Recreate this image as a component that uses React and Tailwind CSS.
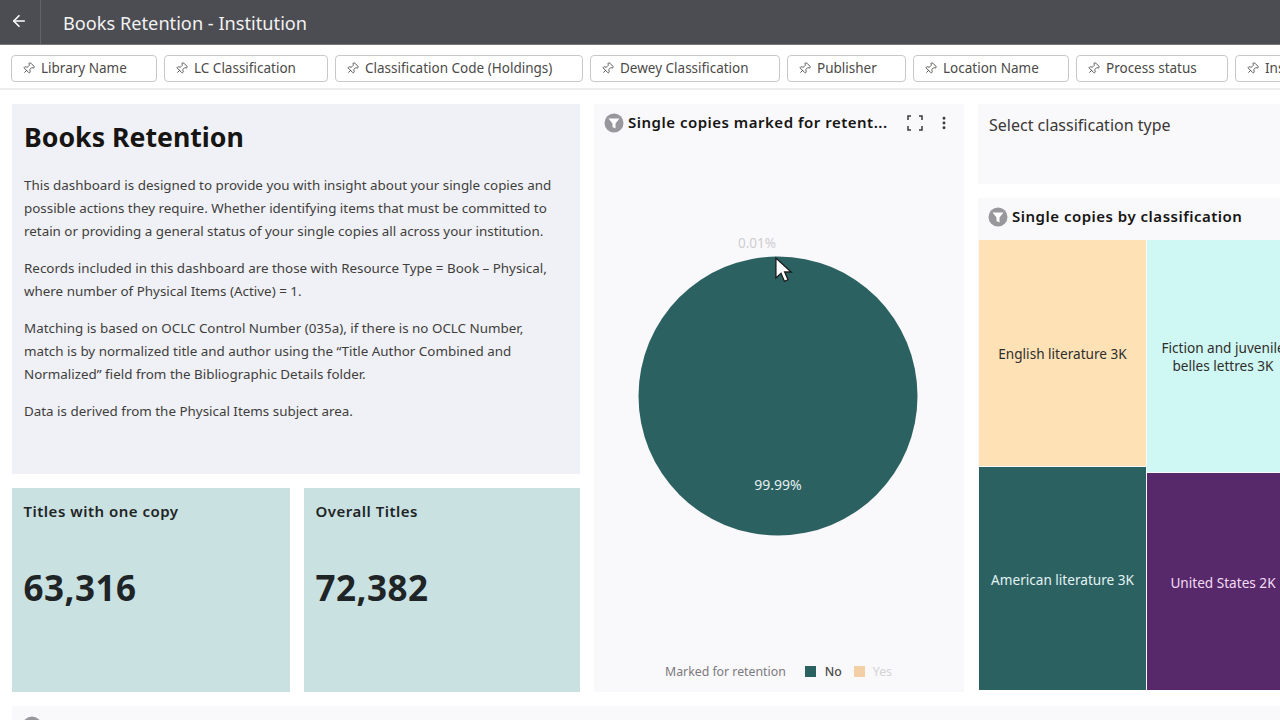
import { ArrowLeft, Pin, EllipsisVertical } from "lucide-react";

const filters = [
  { label: "Library Name", width: "w-[146px]" },
  { label: "LC Classification", width: "w-[164px]" },
  { label: "Classification Code (Holdings)", width: "w-[248px]" },
  { label: "Dewey Classification", width: "w-[190px]" },
  { label: "Publisher", width: "w-[119px]" },
  { label: "Location Name", width: "w-[156px]" },
  { label: "Process status", width: "w-[152px]" },
  { label: "Institution", width: "w-[150px]" },
];

function FilterChip({ label, width }) {
  return (
    <div className={`${width} h-[27px] shrink-0 flex items-center gap-[6px] pl-[10px] rounded-[4px] border border-[#c9c8c6] bg-white text-[13.5px] text-[#4b4a48]`}>
      <Pin className="size-[13px] rotate-45 shrink-0 text-[#4b4a48]" strokeWidth={1.6} />
      <span className="whitespace-nowrap">{label}</span>
    </div>
  );
}

function FilterBadge() {
  return (
    <svg viewBox="0 0 20 20" className="size-[20px] shrink-0">
      <circle cx="10" cy="10" r="9.5" fill="#98979b" />
      <path d="M4.5 5.5h11l-4 5v5l-3-1.6v-3.4z" fill="#ffffff" />
    </svg>
  );
}

function ExpandIcon() {
  return (
    <svg viewBox="0 0 16 16" className="size-[16px]" fill="none" stroke="#3b3a38" strokeWidth="1.5">
      <path d="M1 5V1h3M12 1h3v4M15 11v4h-3M4 15H1v-4" />
    </svg>
  );
}

function PieChart() {
  return (
    <svg viewBox="0 0 280 280" className="size-[280px]">
      <circle cx="140" cy="140" r="139.5" fill="#2c6162" />
    </svg>
  );
}

function Cursor() {
  return (
    <svg viewBox="0 0 20 28" className="absolute left-[774px] top-[256px] w-[19px] h-[28px]">
      <path d="M2 1.5v21l5.4-5 3.6 8.5 3.8-1.7-3.6-8.2H18z" fill="#ffffff" stroke="#1c1c1c" strokeWidth="1.4" />
    </svg>
  );
}

function KpiTile({ title, value, className }) {
  return (
    <div className={`${className} h-[204px] bg-[#c9e1e1] pl-[11.5px] pt-[13px] text-[#1f2426]`}>
      <div className="text-[15px] tracking-[0.5px] font-semibold leading-[20px]">{title}</div>
      <div className="mt-[44px] text-[35px] tracking-[0.5px] font-bold leading-[46px]">{value}</div>
    </div>
  );
}

export default function App() {
  return (
    <div className="relative w-[1280px] h-[720px] overflow-hidden bg-white font-['Noto_Sans',sans-serif]">
      <div className="h-[45px] flex items-stretch bg-[#4c4d52] border-b border-[#77777a]">
        <div className="w-[41px] flex items-center justify-center border-r border-[#626367]">
          <ArrowLeft className="size-[18px] text-white -translate-x-[1px] -translate-y-[1px]" strokeWidth={2.2} />
        </div>
        <div className="pl-[22px] pt-[3px] flex items-center text-[18.2px] text-[#f2f2f2]">Books Retention - Institution</div>
      </div>

      <div className="h-[45px] pl-[11px] pt-[10px] flex items-start gap-[7px] overflow-hidden border-b-2 border-[#eeeded]">
        {filters.map((f) => (
          <FilterChip key={f.label} label={f.label} width={f.width} />
        ))}
      </div>

      <div className="flex gap-[14px] pl-[12px] pt-[14px]">
        <div className="w-[568px] shrink-0 flex flex-col gap-[14px]">
          <div className="h-[370px] bg-[#eff1f6] pl-[12px] pt-[13px] text-[13.4px] leading-[23px] text-[#3f3e3c]">
            <h1 className="text-[26.7px] font-bold leading-[40px] text-[#161513]">Books Retention</h1>
            <p className="mt-[17px] w-[540px]">
              This dashboard is designed to provide you with insight about your single copies and possible actions they require. Whether identifying items that must be committed to retain or providing a general status of your single copies all across your institution.
            </p>
            <p className="mt-[14px] w-[540px]">
              Records included in this dashboard are those with Resource Type = Book – Physical, where number of Physical Items (Active) = 1.
            </p>
            <p className="mt-[14px] w-[530px]">
              Matching is based on OCLC Control Number (035a), if there is no OCLC Number, match is by normalized title and author using the “Title Author Combined and Normalized” field from the Bibliographic Details folder.
            </p>
            <p className="mt-[14px]">Data is derived from the Physical Items subject area.</p>
          </div>
          <div className="flex gap-[14px]">
            <KpiTile title="Titles with one copy" value="63,316" className="w-[278px]" />
            <KpiTile title="Overall Titles" value="72,382" className="w-[276px]" />
          </div>
        </div>

        <div className="w-[370px] shrink-0 h-[588px] bg-[#f9f8fb] flex flex-col">
          <div className="h-[37px] flex items-center pl-[10px] gap-[4px]">
            <FilterBadge />
            <div className="w-[268px] text-[15px] tracking-[0.5px] font-semibold text-[#161513] whitespace-nowrap">Single copies marked for retent...</div>
            <div className="ml-[7px] flex items-center gap-[13px]">
              <ExpandIcon />
              <EllipsisVertical className="size-[16px] text-[#3b3a38]" strokeWidth={2.4} />
            </div>
          </div>
          <div className="mt-[94px] pl-[144px] text-[13.5px] leading-[16px] text-[#cfced1]">0.01%</div>
          <div className="relative mt-[5px] pl-[44px]">
            <PieChart />
            <div className="absolute left-[44px] w-[280px] top-[218px] text-center text-[14px] text-[#e6efef]">99.99%</div>
          </div>
          <div className="mt-auto mb-[11px] pl-[71px] flex items-center text-[12.3px] text-[#7b7a7d]">
            <span>Marked for retention</span>
            <span className="ml-[19px] size-[11px] bg-[#2c6162]" />
            <span className="ml-[9px] text-[#4b4a48] font-medium">No</span>
            <span className="ml-[12px] size-[11px] bg-[#f3cfa5]" />
            <span className="ml-[8px] text-[#d4d3d5]">Yes</span>
          </div>
        </div>

        <div className="w-[302px] shrink-0 flex flex-col gap-[14px]">
          <div className="h-[80px] bg-[#f9f8fb] pl-[11px] pt-[10px] text-[16px] leading-[22px] text-[#3a3937]">Select classification type</div>
          <div className="h-[492px] bg-[#f9f8fb] flex flex-col">
            <div className="h-[42px] flex items-start pt-[9px] pl-[10px] gap-[4px] text-[15px] tracking-[0.5px] font-semibold leading-[19px] text-[#161513] whitespace-nowrap">
              <FilterBadge />
              Single copies by classification
            </div>
            <div className="flex-1 flex gap-[1px] pl-[1px] text-[13.6px] text-center">
              <div className="w-[167px] shrink-0 flex flex-col gap-[1px]">
                <div className="h-[226px] pt-[3px] bg-[#fee2b6] flex items-center justify-center text-[#2f2e2c]">English literature 3K</div>
                <div className="flex-1 pt-[3px] bg-[#2c6162] flex items-center justify-center text-[#e3f3f2]">American literature 3K</div>
              </div>
              <div className="w-[152px] shrink-0 flex flex-col gap-[1px]">
                <div className="h-[232px] pt-[1px] bg-[#cff7f3] flex items-center justify-center leading-[18px] whitespace-nowrap text-[#2f2e2c]">Fiction and juvenile<br />belles lettres 3K</div>
                <div className="flex-1 pt-[3px] bg-[#57296a] flex items-center justify-center whitespace-nowrap text-[#f3dcf5]">United States 2K</div>
              </div>
            </div>
          </div>
        </div>
      </div>

      <div className="mt-[14px] ml-[12px] h-[40px] bg-[#f9f8fb] pl-[10px] pt-[10px] flex items-start gap-[4px] text-[15px] tracking-[0.5px] font-semibold leading-[20px] text-[#161513] whitespace-nowrap">
        <FilterBadge />
        Single copies by library
      </div>

      <Cursor />
    </div>
  );
}
